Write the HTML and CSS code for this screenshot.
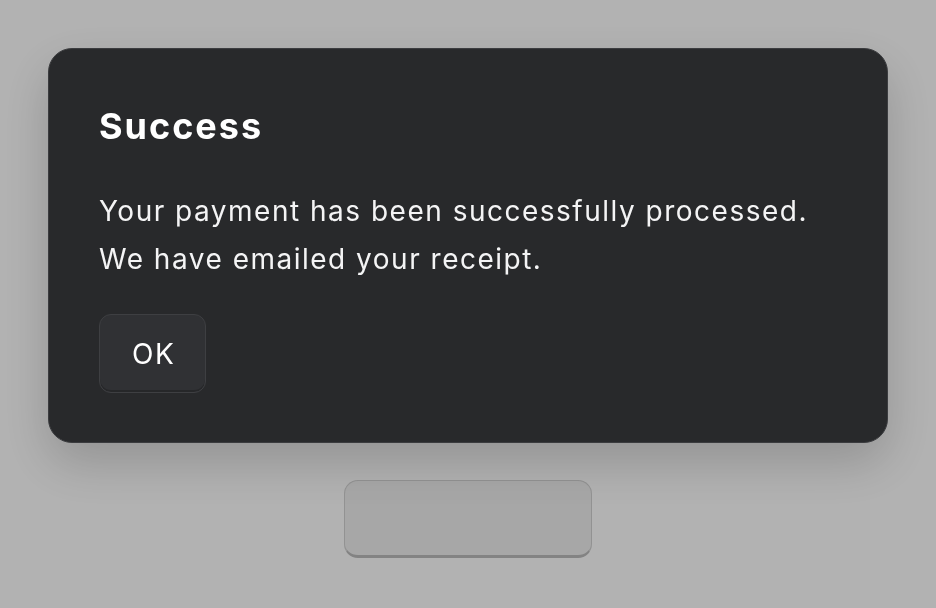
FILE: index.html
```html
<!DOCTYPE html>
<html lang="en">
<head>
<meta charset="utf-8">
<title>Success</title>
<link rel="stylesheet" href="styles.css">
</head>
<body>
<main class="page">
  <button class="trigger" type="button" aria-label="Open dialog"></button>
</main>
<div class="overlay">
  <div class="dialog" role="dialog" aria-labelledby="dlg-title">
    <h2 class="dialog-title" id="dlg-title">Success</h2>
    <p class="dialog-text">Your payment has been successfully processed.<br>We have emailed your receipt.</p>
    <button class="btn-ok" type="button">OK</button>
  </div>
</div>
</body>
</html>
```

FILE: styles.css
```css
* { box-sizing: border-box; }
html, body {
  margin: 0;
  padding: 0;
  height: 100%;
}
body {
  background: #ffffff;
  font-family: Inter, "Liberation Sans", sans-serif;
}
.page {
  display: flex;
  justify-content: center;
  padding-top: 480px;
}
.trigger {
  width: 248px;
  height: 78px;
  background: #f0f0f0;
  border: 1px solid #d2d2d2;
  border-bottom: 3px solid #bcbcbc;
  border-radius: 14px;
}
.overlay {
  position: fixed;
  inset: 0;
  background: rgba(0, 0, 0, 0.3);
  padding: 48px;
}
.dialog {
  width: 840px;
  background: #28292b;
  border: 1px solid #3b3c3f;
  border-radius: 24px;
  padding: 55px 50px 49px;
  box-shadow: 0 20px 50px rgba(0, 0, 0, 0.18);
  color: #ffffff;
  display: flex;
  flex-direction: column;
  align-items: flex-start;
}
.dialog-title {
  margin: 0;
  font-size: 36px;
  line-height: 44px;
  font-weight: 700;
  letter-spacing: 2px;
}
.dialog-text {
  margin: 39px 0 31px;
  font-size: 28px;
  line-height: 48px;
  font-weight: 400;
  letter-spacing: 1.5px;
  color: #f4f4f5;
}
.btn-ok {
  height: 79px;
  padding: 0 30px 0 32px;
  background: #303134;
  border: 1px solid #3e3f42;
  border-radius: 12px;
  box-shadow: inset 0 -2px 0 rgba(0, 0, 0, 0.2);
  color: #ffffff;
  font-family: inherit;
  font-size: 28px;
  letter-spacing: 1.5px;
}
```
